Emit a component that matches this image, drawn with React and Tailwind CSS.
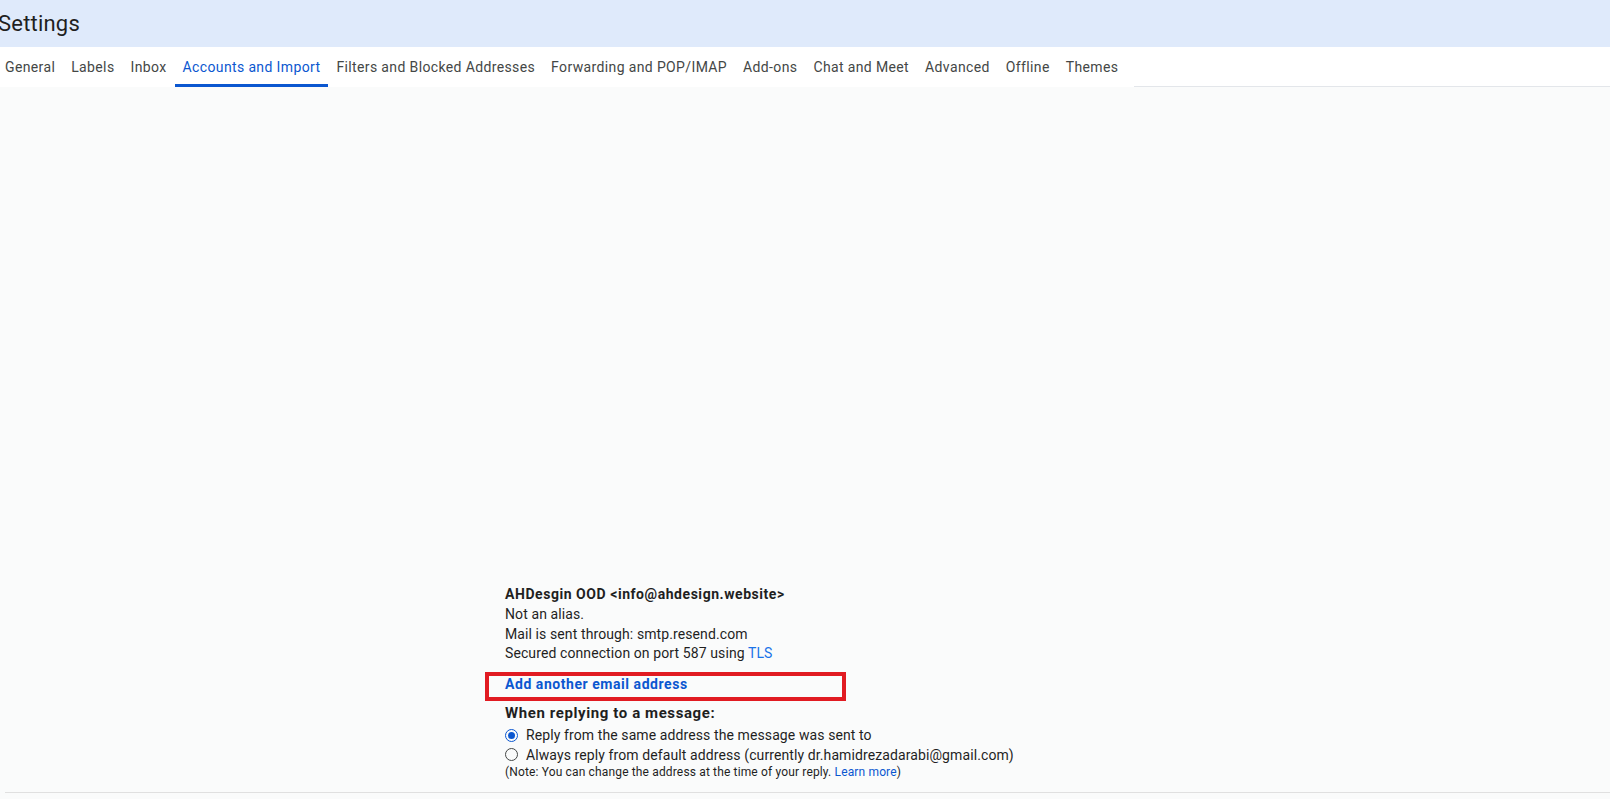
import React from "react";

const tabs = [
  "General",
  "Labels",
  "Inbox",
  "Accounts and Import",
  "Filters and Blocked Addresses",
  "Forwarding and POP/IMAP",
  "Add-ons",
  "Chat and Meet",
  "Advanced",
  "Offline",
  "Themes",
];

const Radio = ({ checked }) =>
  checked ? (
    <span className="w-[13px] h-[13px] rounded-full border-[1.5px] border-[#0b57d0] flex items-center justify-center shrink-0">
      <span className="w-[7px] h-[7px] rounded-full bg-[#0b57d0]" />
    </span>
  ) : (
    <span className="w-[13px] h-[13px] rounded-full border-[1.2px] border-[#444746] shrink-0" />
  );

const App = () => {
  const active = "Accounts and Import";

  return (
    <div className="w-full h-[799px] overflow-hidden bg-[#fafbfb] font-['Roboto',sans-serif] text-[#1f1f1f]">
      {/* top band */}
      <div className="h-[47px] bg-[#dfeafb] flex items-center">
        <h1 className="-ml-[2px] text-[22px] leading-none tracking-[0.2px] text-[#1f1f1f]">Settings</h1>
      </div>

      {/* tab bar */}
      <div className="h-[40px] bg-white flex">
        <div className="-ml-[3px] flex h-full">
          {tabs.map((t) => (
            <div
              key={t}
              className={
                t === active
                  ? "h-full px-2 flex items-center text-[14px] tracking-[0.37px] text-[#0b57d0] border-b-[3px] border-[#0b57d0] pt-[3px]"
                  : "h-full px-2 flex items-center text-[14px] tracking-[0.37px] text-[#444746] border-b-[3px] border-transparent pt-[3px]"
              }
            >
              {t}
            </div>
          ))}
        </div>
        <div className="flex-1 ml-[8px] border-b border-[#e3e6ea]" />
      </div>

      {/* send mail as block */}
      <div className="pl-[505px] pt-[497px] text-[14px] leading-[20px] tracking-[0.1px]">
        <div className="font-bold tracking-[0.55px] text-[#1f1f1f]">AHDesgin OOD &lt;info@ahdesign.website&gt;</div>
        <div>Not an alias.</div>
        <div>Mail is sent through: smtp.resend.com</div>
        <div className="leading-[19px]">
          Secured connection on port 587 using <span className="text-[#1a73e8]">TLS</span>
        </div>

        <div className="mt-[9px] -ml-[20px] w-[361px] h-[29px] border-4 border-[#e11b22] pl-[16px]">
          <span className="block leading-[16px] font-bold tracking-[0.55px] text-[#0b57d0]">Add another email address</span>
        </div>

        <div className="mt-[2px] text-[15px] font-bold tracking-[0.6px] text-[#1f1f1f]">When replying to a message:</div>
        <div className="flex items-center gap-[8px] h-[20px] mt-[2px]">
          <Radio checked />
          <span>Reply from the same address the message was sent to</span>
        </div>
        <div className="flex items-center gap-[8px] h-[19px]">
          <Radio />
          <span>Always reply from default address (currently dr.hamidrezadarabi@gmail.com)</span>
        </div>
        <div className="text-[12px] leading-[16px] tracking-[0.15px] text-[#1f1f1f]">
          (Note: You can change the address at the time of your reply.{" "}
          <span className="text-[#0b57d0]">Learn more</span>)
        </div>
      </div>

      <div className="ml-[5px] mt-[12px] border-t border-[#e0e0e0]" />
    </div>
  );
};

export default App;
